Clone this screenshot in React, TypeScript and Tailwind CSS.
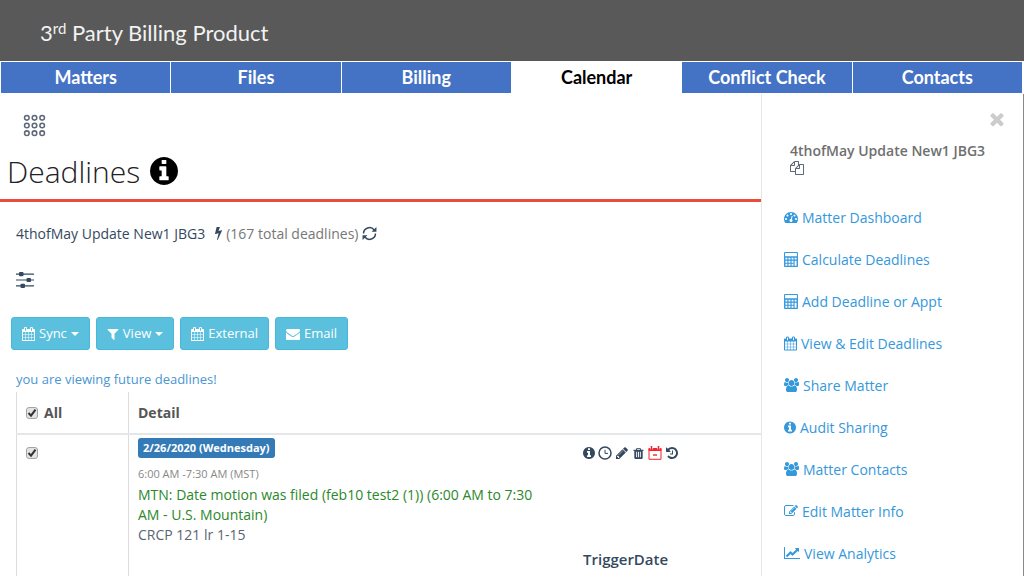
import { Fragment, ReactNode } from "react";

interface IconProps {
  d: string;
  viewBox?: string;
  className?: string;
}

function Icon({ d, viewBox = "0 0 1792 1792", className }: IconProps) {
  return (
    <svg viewBox={viewBox} className={className} fill="currentColor" aria-hidden="true">
      <path d={d} />
    </svg>
  );
}

const icons = {
  info: "M1152 1376v-160q0-14-9-23t-23-9h-96v-512q0-14-9-23t-23-9h-320q-14 0-23 9t-9 23v160q0 14 9 23t23 9h96v320h-96q-14 0-23 9t-9 23v160q0 14 9 23t23 9h448q14 0 23-9t9-23zm-128-896v-160q0-14-9-23t-23-9h-192q-14 0-23 9t-9 23v160q0 14 9 23t23 9h192q14 0 23-9t9-23zm640 416q0 209-103 385.5t-279.5 279.5-385.5 103-385.5-103-279.5-279.5-103-385.5 103-385.5 279.5-279.5 385.5-103 385.5 103 279.5 279.5 103 385.5z",
  calendar:
    "M192 1664h288v-288h-288v288zm352 0h320v-288h-320v288zm-352-352h288v-320h-288v320zm352 0h320v-320h-320v320zm-352-384h288v-288h-288v288zm736 736h320v-288h-320v288zm-384-736h320v-288h-320v288zm768 736h288v-288h-288v288zm-384-352h320v-320h-320v320zm-352-864v-288q0-13-9.5-22.5t-22.5-9.5h-64q-13 0-22.5 9.5t-9.5 22.5v288q0 13 9.5 22.5t22.5 9.5h64q13 0 22.5-9.5t9.5-22.5zm736 864h288v-320h-288v320zm-384-384h320v-288h-320v288zm384 0h288v-288h-288v288zm32-480v-288q0-13-9.5-22.5t-22.5-9.5h-64q-13 0-22.5 9.5t-9.5 22.5v288q0 13 9.5 22.5t22.5 9.5h64q13 0 22.5-9.5t9.5-22.5zm384-64v1280q0 52-38 90t-90 38h-1408q-52 0-90-38t-38-90v-1280q0-52 38-90t90-38h128v-96q0-66 47-113t113-47h64q66 0 113 47t47 113v96h384v-96q0-66 47-113t113-47h64q66 0 113 47t47 113v96h128q52 0 90 38t38 90z",
  filter:
    "M1595 295q17 41-14 70l-493 493v742q0 42-39 59-13 5-25 5-27 0-45-19l-256-256q-19-19-19-45v-486l-493-493q-31-29-14-70 17-39 59-39h1280q42 0 59 39z",
  envelope:
    "M1792 710v794q0 66-47 113t-113 47h-1472q-66 0-113-47t-47-113v-794q44 49 101 87 362 246 497 345 57 42 92.5 65.5t94.5 48 110 24.5h2q51 0 110-24.5t94.5-48 92.5-65.5q170-123 498-345 57-39 100-87zm0-294q0 79-49 151t-122 123q-376 261-468 325-10 7-42.5 31t-54 38.5-52 32.5-57.5 27-50 9h-2q-23 0-50-9t-57.5-27-52-32.5-54-38.5-42.5-31q-91-64-262-182.5t-205-142.5q-62-42-117-115.5t-55-136.5q0-78 41.5-130t118.5-52h1472q65 0 112.5 47t47.5 113z",
  bolt: "M1333 566q18 20 7 44l-540 1157q-13 25-42 25-4 0-14-2-17-5-25.5-19t-4.5-30l197-808-406 101q-4 1-12 1-18 0-31-11-18-15-13-39l201-825q4-14 16-23t28-9h328q19 0 32 12.5t13 29.5q0 8-5 18l-171 463 396-98q8-2 12-2 19 0 34 15z",
  pencil:
    "M491 1536l91-91-235-235-91 91v107h128v128h107zm523-928q0-22-22-22-10 0-17 7l-542 542q-7 7-7 17 0 22 22 22 10 0 17-7l542-542q7-7 7-17zm-54-192l416 416-832 832h-416v-416zm683 96q0 53-37 90l-166 166-416-416 166-165q36-38 90-38 53 0 91 38l235 234q37 39 37 91z",
  trash:
    "M704 1376v-704q0-14-9-23t-23-9h-64q-14 0-23 9t-9 23v704q0 14 9 23t23 9h64q14 0 23-9t9-23zm256 0v-704q0-14-9-23t-23-9h-64q-14 0-23 9t-9 23v704q0 14 9 23t23 9h64q14 0 23-9t9-23zm256 0v-704q0-14-9-23t-23-9h-64q-14 0-23 9t-9 23v704q0 14 9 23t23 9h64q14 0 23-9t9-23zm-544-992h448l-48-117q-7-9-17-11h-317q-10 2-17 11zm928 32v64q0 14-9 23t-23 9h-96v948q0 83-47 143.5t-113 60.5h-832q-66 0-113-58.5t-47-141.5v-952h-96q-14 0-23-9t-9-23v-64q0-14 9-23t23-9h309l70-167q15-37 54-63t79-26h320q40 0 79 26t54 63l70 167h309q14 0 23 9t9 23z",
  history:
    "M1664 896q0 156-61 298t-164 245-245 164-298 61q-172 0-327-72.5t-264-204.5q-7-10-6.5-22.5t8.5-20.5l137-138q10-9 25-9 16 2 23 12 73 95 179 147t225 52q104 0 198.5-40.5t163.5-109.5 109.5-163.5 40.5-198.5-40.5-198.5-109.5-163.5-163.5-109.5-198.5-40.5q-98 0-188 35.5t-160 101.5l137 138q31 30 14 69-17 40-59 40h-448q-26 0-45-19t-19-45v-448q0-42 40-59 39-17 69 14l130 129q107-101 244.5-156.5t284.5-55.5q156 0 298 61t245 164 164 245 61 298zm-640-288v448q0 14-9 23t-23 9h-320q-14 0-23-9t-9-23v-64q0-14 9-23t23-9h224v-352q0-14 9-23t23-9h64q14 0 23 9t9 23z",
  files:
    "M1696 384q40 0 68 28t28 68v1216q0 40-28 68t-68 28h-960q-40 0-68-28t-28-68v-288h-544q-40 0-68-28t-28-68v-672q0-40 20-88t48-76l408-408q28-28 76-48t88-20h416q40 0 68 28t28 68v328q68-40 128-40h416zm-544 213l-299 299h299v-299zm-640-384l-299 299h299v-299zm196 647l316-316v-416h-384v416q0 40-28 68t-68 28h-416v640h512v-256q0-40 20-88t48-76zm956 804v-1152h-384v416q0 40-28 68t-68 28h-416v640h896z",
  times:
    "M1490 1322q0 40-28 68l-136 136q-28 28-68 28t-68-28l-294-294-294 294q-28 28-68 28t-68-28l-136-136q-28-28-28-68t28-68l294-294-294-294q-28-28-28-68t28-68l136-136q28-28 68-28t68 28l294 294 294-294q28-28 68-28t68 28l136 136q28 28 28 68t-28 68l-294 294 294 294q28 28 28 68z",
  dashboard:
    "M384 1152q0-53-37.5-90.5t-90.5-37.5-90.5 37.5-37.5 90.5 37.5 90.5 90.5 37.5 90.5-37.5 37.5-90.5zm192-448q0-53-37.5-90.5t-90.5-37.5-90.5 37.5-37.5 90.5 37.5 90.5 90.5 37.5 90.5-37.5 37.5-90.5zm428 481l101-382q6-26-7.5-48.5t-38.5-29.5-48 6.5-30 39.5l-101 382q-60 5-107 43.5t-63 98.5q-20 77 20 146t117 89 146-20 89-117q16-60-6-117t-72-91zm660-33q0-53-37.5-90.5t-90.5-37.5-90.5 37.5-37.5 90.5 37.5 90.5 90.5 37.5 90.5-37.5 37.5-90.5zm-640-640q0-53-37.5-90.5t-90.5-37.5-90.5 37.5-37.5 90.5 37.5 90.5 90.5 37.5 90.5-37.5 37.5-90.5zm448 192q0-53-37.5-90.5t-90.5-37.5-90.5 37.5-37.5 90.5 37.5 90.5 90.5 37.5 90.5-37.5 37.5-90.5zm320 448q0 261-141 483-19 29-54 29h-1402q-35 0-54-29-141-221-141-483 0-182 71-348t191-286 286-191 348-71 348 71 286 191 191 286 71 348z",
  calculator:
    "M128 0h1408q52 0 90 38t38 90v1536q0 52-38 90t-90 38h-1408q-52 0-90-38t-38-90v-1536q0-52 38-90t90-38zm0 128v384h1408v-384zm40 552v230h230v-230zm366 0v230h230v-230zm366 0v230h230v-230zm366 0v230h230v-230zm-1098 366v230h230v-230zm366 0v230h230v-230zm366 0v230h230v-230zm-732 366v230h230v-230zm366 0v230h230v-230zm366 0v230h230v-230zm366-366v596h230v-596z",
  users:
    "M657 896q-162 5-265 128h-134q-82 0-138-40.5t-56-118.5q0-353 124-353 6 0 43.5 21t97.5 42.5 119 21.5q67 0 133-23-5 37-5 66 0 159 93 289zm1071 637q0 120-73 189.5t-194 69.5h-874q-121 0-194-69.5t-73-189.5q0-53 3.5-103.5t14-109 26.5-108.5 43-97.5 62-81 85.5-53.5 111.5-20q10 0 43 21.5t73 48 107 48 135 21.5 135-21.5 107-48 73-48 43-21.5q61 0 111.5 20t85.5 53.5 62 81 43 97.5 26.5 108.5 14 109 3.5 103.5zm-1024-1277q0 106-75 181t-181 75-181-75-75-181 75-181 181-75 181 75 75 181zm704 384q0 159-112.5 271.5t-271.5 112.5-271.5-112.5-112.5-271.5 112.5-271.5 271.5-112.5 271.5 112.5 112.5 271.5zm576 225q0 78-56 118.5t-138 40.5h-134q-103-123-265-128 93-130 93-289 0-29-5-66 66 23 133 23 59 0 119-21.5t97.5-42.5 43.5-21q124 0 124 353zm-128-609q0 106-75 181t-181 75-181-75-75-181 75-181 181-75 181 75 75 181z",
  edit: "M888 1184l116-116-152-152-116 116v56h96v96h56zm440-720q-16-16-33 1l-350 350q-17 17-1 33t33-1l350-350q17-17 1-33zm80 594v190q0 119-84.5 203.5t-203.5 84.5h-832q-119 0-203.5-84.5t-84.5-203.5v-832q0-119 84.5-203.5t203.5-84.5h832q63 0 117 25 15 7 18 23 3 17-9 29l-49 49q-14 14-32 8-23-6-45-6h-832q-66 0-113 47t-47 113v832q0 66 47 113t113 47h832q66 0 113-47t47-113v-126q0-13 9-22l64-64q15-15 35-7t20 29zm-96-738l288 288-672 672h-288v-288zm444 132l-92 92-288-288 92-92q28-28 68-28t68 28l152 152q28 28 28 68t-28 68z",
  chart:
    "M2048 1536v128h-2048v-1536h128v1408h1920zm-128-1248v435q0 21-19.5 29.5t-35.5-7.5l-121-121-633 633q-10 10-23 10t-23-10l-233-233-416 416-192-192 585-585q10-10 23-10t23 10l233 233 464-464-121-121q-16-16-7.5-35.5t29.5-19.5h435q14 0 23 9t9 23z",
};

function GridIcon() {
  return (
    <svg viewBox="0 0 24 24" className="size-[23px]" fill="none" stroke="#5d6977" strokeWidth="1.6">
      {[4, 12, 20].map((y) => (
        <Fragment key={y}>
          <circle cx="4" cy={y} r="2.4" />
          <circle cx="12" cy={y} r="2.4" />
          <circle cx="20" cy={y} r="2.4" />
        </Fragment>
      ))}
    </svg>
  );
}

function RefreshIcon() {
  return (
    <svg viewBox="0 0 16 16" className="size-[15px]" fill="none" stroke="currentColor" strokeWidth="1.6">
      <path d="M1.6 8A6.4 6.4 0 0 1 13 4.2M14.4 8A6.4 6.4 0 0 1 3 11.8" />
      <path d="M15.4 1v5.2h-5.2zM0.6 15v-5.2h5.2z" fill="currentColor" stroke="none" />
    </svg>
  );
}

function SlidersIcon() {
  return (
    <svg viewBox="0 0 18 18" className="size-[18px]" fill="currentColor">
      <path d="M0 2.5h18v1.2H0zM0 8.4h18v1.2H0zM0 14.3h18v1.2H0z" />
      <rect x="3" y="1" width="4.5" height="4.2" rx="1" />
      <rect x="10.5" y="6.9" width="4.5" height="4.2" rx="1" />
      <rect x="4.5" y="12.8" width="4.5" height="4.2" rx="1" />
    </svg>
  );
}

function ClockIcon() {
  return (
    <svg viewBox="0 0 14 14" className="size-[14px]" fill="none" stroke="currentColor">
      <circle cx="7" cy="7" r="6" strokeWidth="1.5" />
      <path d="M7 3.8v3.6h3" />
    </svg>
  );
}

function CalendarMinusIcon() {
  return (
    <svg viewBox="0 0 14 14" className="size-[14px] text-[#f5222d]" fill="none" stroke="currentColor">
      <path d="M1 2.5h12v10.8H1z" />
      <path d="M1 2.5h12v2H1z" fill="currentColor" />
      <path d="M3.5 0v3M10.5 0v3" strokeWidth="1.6" />
      <path d="M2.4 1.5v2M4.6 1.5v2M9.4 1.5v2M11.6 1.5v2" stroke="#fff" strokeWidth="0.6" />
      <path d="M5 9h4" strokeWidth="1.4" />
    </svg>
  );
}

const tabs = ["Matters", "Files", "Billing", "Calendar", "Conflict Check", "Contacts"];

const links = [
  { label: "Matter Dashboard", icon: icons.dashboard, viewBox: "0 0 1792 1792", size: "h-[14px] w-[14px]" },
  { label: "Calculate Deadlines", icon: icons.calculator, viewBox: "0 0 1664 1792", size: "h-[15px] w-[14px]" },
  { label: "Add Deadline or Appt", icon: icons.calculator, viewBox: "0 0 1664 1792", size: "h-[15px] w-[14px]" },
  { label: "View & Edit Deadlines", icon: icons.calendar, viewBox: "64 0 1664 1792", size: "h-[15px] w-[13px]" },
  { label: "Share Matter", icon: icons.users, viewBox: "64 0 1920 1792", size: "h-[14px] w-[15px]" },
  { label: "Audit Sharing", icon: icons.info, viewBox: "128 0 1536 1792", size: "h-[15px] w-[12px]" },
  { label: "Matter Contacts", icon: icons.users, viewBox: "64 0 1920 1792", size: "h-[14px] w-[15px]" },
  { label: "Edit Matter Info", icon: icons.edit, viewBox: "0 0 1792 1792", size: "h-[14px] w-[14px]" },
  { label: "View Analytics", icon: icons.chart, viewBox: "0 0 2048 1792", size: "h-[14px] w-[16px]" },
];

function ToolbarButton({ children }: { children: ReactNode }) {
  return (
    <button
      type="button"
      className="flex h-[33px] items-center gap-1 rounded-[3px] border border-[#46b8da] bg-[#5bc0de] px-[10px] text-[13px] text-white"
    >
      {children}
    </button>
  );
}

function Caret() {
  return <span className="border-x-4 border-t-4 border-x-transparent border-t-white" />;
}

function Checkbox({ label, id }: { label: string; id: string }) {
  return (
    <span className="grid size-3">
      <input
        id={id}
        type="checkbox"
        defaultChecked
        aria-label={label}
        className="peer col-start-1 row-start-1 size-3 appearance-none rounded-[3px] border border-[#a5a5a5] bg-[#e4e4e4]"
      />
      <svg
        viewBox="0 0 12 12"
        className="pointer-events-none invisible col-start-1 row-start-1 size-3 peer-checked:visible"
        fill="none"
        stroke="#333"
        strokeWidth="2"
      >
        <path d="M2.5 6l2.5 2.7L9.5 2.6" />
      </svg>
    </span>
  );
}

function IconButton({ label, children }: { label: string; children: ReactNode }) {
  return (
    <button type="button" aria-label={label}>
      {children}
    </button>
  );
}

function DeadlinesTable() {
  return (
    <table className="ml-4 w-[calc(100%-16px)] table-fixed border-collapse text-left align-top">
      <colgroup>
        <col className="w-28" />
        <col />
        <col className="w-[187px]" />
      </colgroup>
      <thead>
        <tr className="h-[42px] border-b-2 border-[#e4e7ea] text-[14px] font-semibold text-[#555]">
          <th className="border-x border-[#ddd] px-[9px]">
            <label htmlFor="all" className="flex items-center gap-[6px]">
              <Checkbox id="all" label="All" />
              All
            </label>
          </th>
          <th className="px-[9px]">Detail</th>
          <th />
        </tr>
      </thead>
      <tbody>
        <tr className="align-top">
          <td className="border-x border-[#ddd] px-[9px] pt-3">
            <Checkbox id="row-1" label="Select deadline" />
          </td>
          <td className="pt-[3px] pr-5 pl-[9px] text-[14px] leading-5">
            <span className="flex h-5 w-fit items-center rounded-[3px] bg-[#337ab7] px-[5px] text-[11px] font-bold text-white">
              2/26/2020 (Wednesday)
            </span>
            <p className="mt-[6px] mb-px text-[11px] text-[#888]">6:00 AM -7:30 AM (MST)</p>
            <p className="text-[#2b882b]">
              MTN: Date motion was filed (feb10 test2 (1)) (6:00 AM to 7:30 AM - U.S. Mountain)
            </p>
            <p className="text-[#5a6473]">CRCP 121 lr 1-15</p>
          </td>
          <td className="px-[9px] pt-[11px] text-[#34495e]">
            <div className="flex h-[14px] items-center gap-[3px]">
              <IconButton label="Info">
                <Icon d={icons.info} viewBox="128 128 1536 1536" className="size-3" />
              </IconButton>
              <IconButton label="Reminder">
                <ClockIcon />
              </IconButton>
              <IconButton label="Edit">
                <Icon d={icons.pencil} className="size-[14px]" />
              </IconButton>
              <IconButton label="Delete">
                <Icon d={icons.trash} className="size-[13px]" />
              </IconButton>
              <IconButton label="Remove from calendar">
                <CalendarMinusIcon />
              </IconButton>
              <IconButton label="History">
                <Icon d={icons.history} className="size-[14px]" />
              </IconButton>
            </div>
            <p className="mt-[89px] text-[15px] leading-5 font-semibold">TriggerDate</p>
          </td>
        </tr>
        <tr className="h-20">
          <td className="border-x border-[#ddd]" />
          <td />
          <td />
        </tr>
      </tbody>
    </table>
  );
}

function MatterPanel() {
  return (
    <aside className="flex w-[263px] shrink-0 flex-col border-l border-[#e7e7e7]">
      <div className="flex flex-1 flex-col border-r border-[#8a8a8a] pl-[22px]">
        <button type="button" aria-label="Close" className="mt-[15px] mr-4 self-end text-[#ccc]">
          <Icon d={icons.times} className="size-5" />
        </button>
        <div className="mt-3 pl-[6px]">
          <h2 className="text-[14px] leading-5 font-semibold text-[#6f6f6f]">4thofMay Update New1 JBG3</h2>
          <button type="button" aria-label="Copy" className="block text-[#5d6977]">
            <Icon d={icons.files} className="size-[14px]" />
          </button>
        </div>
        <nav className="mt-[21px] flex flex-col">
          {links.map(({ label, icon, viewBox, size }) => (
            <a key={label} href="#" className="flex h-[42px] items-center gap-1 text-[14px] text-[#3498db]">
              <Icon d={icon} viewBox={viewBox} className={size} />
              {label}
            </a>
          ))}
        </nav>
      </div>
    </aside>
  );
}

export default function App() {
  return (
    <div className="flex h-screen flex-col overflow-hidden bg-white font-['Open_Sans','Noto_Sans',sans-serif]">
      <header className="flex h-[61px] shrink-0 items-center bg-[#595959] pt-1 pl-10 font-[Lato,sans-serif] text-[22px] text-[#f2f2f2]">
        <h1>
          3<sup className="text-[15px]">rd</sup> Party Billing Product
        </h1>
      </header>
      <nav className="flex shrink-0 gap-px py-px pr-[2px] pl-px font-[Lato,sans-serif] text-[18px] font-bold">
        {tabs.map((tab) => (
          <a
            key={tab}
            href="#"
            className={`flex h-[31px] flex-1 basis-0 items-center justify-center ${
              tab === "Calendar" ? "bg-white text-black" : "bg-[#4472c4] text-white"
            }`}
          >
            {tab}
          </a>
        ))}
      </nav>
      <div className="flex min-h-0 flex-1">
        <main className="min-w-0 flex-1">
          <div className="border-b-[3px] border-[#e74c3c] pb-2">
            <button type="button" aria-label="Apps" className="mt-5 ml-[23px] block">
              <GridIcon />
            </button>
            <div className="mt-[14px] flex h-10 items-center gap-[10px] pl-[7px]">
              <h2 className="text-[30px] font-light text-[#222]">Deadlines</h2>
              <Icon d={icons.info} viewBox="128 128 1536 1536" className="size-7 text-black" />
            </div>
          </div>
          <div className="mt-[21px] flex h-5 items-center pl-4 text-[14px] text-[#34495e]">
            <span>4thofMay Update New1 JBG3</span>
            <Icon d={icons.bolt} viewBox="448 0 896 1792" className="ml-[10px] h-[14px] w-[7px]" />
            <span className="ml-1 text-[#777]">(167 total deadlines)</span>
            <button type="button" aria-label="Refresh" className="ml-1">
              <RefreshIcon />
            </button>
          </div>
          <button type="button" aria-label="Filters" className="mt-7 ml-4 block text-[#34495e]">
            <SlidersIcon />
          </button>
          <div className="mt-7 flex gap-[6px] pl-[11px]">
            <ToolbarButton>
              <Icon d={icons.calendar} viewBox="64 0 1664 1792" className="h-[14px] w-[13px]" />
              Sync
              <Caret />
            </ToolbarButton>
            <ToolbarButton>
              <Icon d={icons.filter} viewBox="192 128 1408 1536" className="h-3 w-3" />
              View
              <Caret />
            </ToolbarButton>
            <ToolbarButton>
              <Icon d={icons.calendar} viewBox="64 0 1664 1792" className="h-[14px] w-[13px]" />
              External
            </ToolbarButton>
            <ToolbarButton>
              <Icon d={icons.envelope} className="size-[14px]" />
              Email
            </ToolbarButton>
          </div>
          <p className="mt-[19px] mb-[3px] pl-4 text-[13px] leading-5 text-[#4a96d2]">
            you are viewing future deadlines!
          </p>
          <DeadlinesTable />
        </main>
        <MatterPanel />
      </div>
    </div>
  );
}
